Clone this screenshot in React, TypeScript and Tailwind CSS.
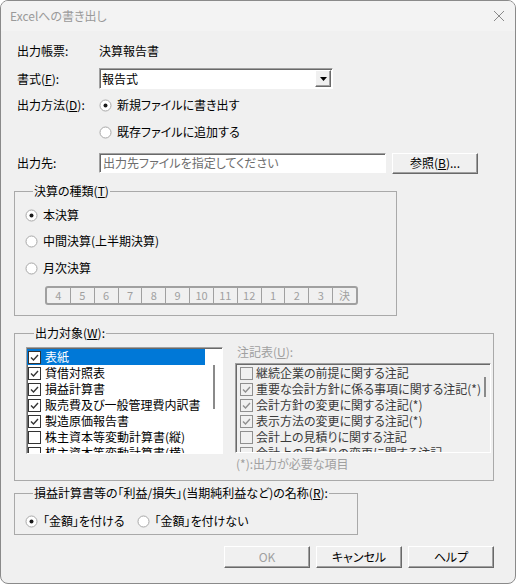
import React from 'react';

const raised =
  'border border-t-white border-l-white border-r-[#696969] border-b-[#696969] shadow-[inset_-1px_-1px_0_#a0a0a0] bg-[#f0f0f0]';
const sunken =
  'border border-t-[#a0a0a0] border-l-[#a0a0a0] border-r-white border-b-white shadow-[inset_1px_1px_0_#696969]';

function Radio({ checked, label, className = '' }: { checked?: boolean; label: string; className?: string }) {
  return (
    <div className={`flex h-5 items-center ${className}`}>
      <svg width="13" height="13" viewBox="0 0 13 13" className="shrink-0">
        <circle cx="6.5" cy="6.5" r="5.5" fill="#fff" stroke="#a7a7a7" />
        {checked && <circle cx="6.5" cy="6.5" r="2" fill="#1a1a1a" />}
      </svg>
      <span className="ml-[5px]">{label}</span>
    </div>
  );
}

function Check({ checked, dim }: { checked?: boolean; dim?: boolean }) {
  const c = dim ? '#8f8f8f' : '#333';
  return (
    <svg width="13" height="13" viewBox="0 0 13 13" className="shrink-0">
      <rect x="0.5" y="0.5" width="12" height="12" fill={dim ? '#f0f0f0' : '#fff'} stroke={c} />
      {checked && <path d="M3 6.5l2.5 2.5 4.5-5" fill="none" stroke={c} strokeWidth="1.4" />}
    </svg>
  );
}

const outputs: [string, boolean][] = [
  ['表紙', true],
  ['貸借対照表', true],
  ['損益計算書', true],
  ['販売費及び一般管理費内訳書', true],
  ['製造原価報告書', true],
  ['株主資本等変動計算書(縦)', false],
  ['株主資本等変動計算書(横)', false],
];

const notes: [string, boolean][] = [
  ['継続企業の前提に関する注記', false],
  ['重要な会計方針に係る事項に関する注記(*)', true],
  ['会計方針の変更に関する注記(*)', true],
  ['表示方法の変更に関する注記(*)', true],
  ['会計上の見積りに関する注記', false],
  ['会計上の見積りの変更に関する注記', false],
];

const months = ['4', '5', '6', '7', '8', '9', '10', '11', '12', '1', '2', '3', '決'];

export default function App() {
  return (
    <div className="w-[516px] h-[584px] bg-white">
      <div className="w-[516px] h-[584px] flex flex-col rounded-[8px] overflow-hidden border border-[#8a8a8a] bg-[#f0f0f0] text-[12px] leading-none text-black font-['Noto_Sans_CJK_JP',sans-serif] [font-feature-settings:'palt']">
        {/* title bar */}
        <div className="h-[30px] shrink-0 flex items-center justify-between bg-[#f3f3f3] pl-[9px] pr-[10px]">
          <span className="text-[#9a9a9a]">Excelへの書き出し</span>
          <svg width="12" height="12" viewBox="0 0 12 12">
            <path d="M1 1l10 10M11 1L1 11" stroke="#8a8a8a" strokeWidth="1" />
          </svg>
        </div>

        <div className="flex flex-col pl-[13px] pt-[10px]">
          <div className="flex h-5 items-center ml-[3px]">
            <span className="w-[82px]">出力帳票:</span>
            <span>決算報告書</span>
          </div>

          <div className="flex h-[21px] items-center ml-[3px] mt-[7px]">
            <span className="w-[82px]">
              書式(<u>F</u>):
            </span>
            <div className={`w-[234px] h-[21px] flex items-center bg-white ${sunken}`}>
              <span className="flex-1 pl-[2px]">報告式</span>
              <div className={`w-[16px] h-[17px] mr-[1px] flex items-center justify-center ${raised}`}>
                <svg width="7" height="4" viewBox="0 0 7 4">
                  <path d="M0 0h7L3.5 4z" fill="#000" />
                </svg>
              </div>
            </div>
          </div>

          <div className="flex h-5 items-center ml-[3px] mt-[6px]">
            <span className="w-[82px]">
              出力方法(<u>D</u>):
            </span>
            <Radio checked label="新規ファイルに書き出す" />
          </div>
          <Radio label="既存ファイルに追加する" className="ml-[85px] mt-[7px]" />

          <div className="flex h-[20px] items-center ml-[3px] mt-[11px]">
            <span className="w-[82px]">出力先:</span>
            <div className={`w-[287px] h-[20px] flex items-center bg-white pl-[3px] text-[#6d6d6d] ${sunken}`}>
              出力先ファイルを指定してください
            </div>
            <div className={`w-[86px] h-[21px] ml-[6px] flex items-center justify-center ${raised}`}>
              参照(<u>B</u>)...
            </div>
          </div>

          {/* 決算の種類 */}
          <fieldset className="w-[383px] mt-[12px] border border-[#a9a9a9] pl-[10px] pb-[10px]">
            <legend className="ml-[8px] px-[1px]">
              決算の種類(<u>T</u>)
            </legend>
            <Radio checked label="本決算" className="mt-[8px]" />
            <Radio label="中間決算(上半期決算)" className="mt-[6px]" />
            <Radio label="月次決算" className="mt-[7px]" />
            <div className="ml-[20px] mt-[8px] w-[313px] h-[19px] flex rounded-[3px] border-2 border-[#a0a0a0] text-[11px] text-[#a0a0a0]">
              {months.map((m, i) => (
                <div
                  key={m}
                  className={`flex-1 flex items-center justify-center ${i > 0 ? 'border-l border-[#a0a0a0]' : ''}`}
                >
                  {m}
                </div>
              ))}
            </div>
          </fieldset>

          {/* 出力対象 */}
          <fieldset className="w-[480px] mt-[11px] border border-[#a9a9a9] pl-[11px] pb-[10px]">
            <legend className="ml-[8px] px-[1px]">
              出力対象(<u>W</u>):
            </legend>
            <div className="flex">
              <div className={`w-[197px] h-[107px] mt-[8px] flex overflow-hidden bg-white ${sunken}`}>
                <div className="w-[178px] pt-[1px]">
                  {outputs.map(([t, c], i) => (
                    <div
                      key={t}
                      className={`h-4 flex items-center pl-[1px] whitespace-nowrap ${i === 0 ? 'bg-[#0078d7] text-white' : ''}`}
                    >
                      <Check checked={c} />
                      <span className="ml-[4px]">{t}</span>
                    </div>
                  ))}
                </div>
                <div className="flex-1 flex justify-center pt-[17px]">
                  <div className="w-[2px] h-[44px] bg-[#8a8a8a]" />
                </div>
              </div>

              <div className="ml-[12px] flex flex-col">
                <span className="h-[14px] mt-[7px] ml-[2px] text-[#a0a0a0]">
                  注記表(<u>U</u>):
                </span>
                <div className={`w-[256px] h-[90px] mt-[3px] flex overflow-hidden ${sunken}`}>
                  <div className="flex-1 pt-[1px] text-[#3a3a3a]">
                    {notes.map(([t, c]) => (
                      <div key={t} className="h-4 flex items-center pl-[4px] whitespace-nowrap">
                        <Check checked={c} dim />
                        <span className="ml-[3px]">{t}</span>
                      </div>
                    ))}
                  </div>
                  <div className="w-[14px] flex justify-center pt-[13px]">
                    <div className="w-[2px] h-[20px] bg-[#8a8a8a]" />
                  </div>
                </div>
                <span className="mt-[5px] ml-[1px] text-[#a0a0a0]">(*):出力が必要な項目</span>
              </div>
            </div>
          </fieldset>

          {/* 名称 */}
          <fieldset className="w-[344px] mt-[6px] border border-[#a9a9a9] pl-[10px] pb-[3px]">
            <legend className="ml-[8px] px-[1px]">
              損益計算書等の「利益/損失」(当期純利益など)の名称(<u>R</u>):
            </legend>
            <div className="flex mt-[12px]">
              <Radio checked label="「金額」を付ける" />
              <Radio label="「金額」を付けない" className="ml-[12px]" />
            </div>
          </fieldset>

          <div className="w-[480px] mt-[11px] flex justify-end gap-[6px]">
            <div className={`w-[86px] h-[22px] flex items-center justify-center text-[#a0a0a0] ${raised}`}>OK</div>
            <div className={`w-[86px] h-[22px] flex items-center justify-center ${raised}`}>キャンセル</div>
            <div className={`w-[86px] h-[22px] flex items-center justify-center ${raised}`}>ヘルプ</div>
          </div>
        </div>
      </div>
    </div>
  );
}
